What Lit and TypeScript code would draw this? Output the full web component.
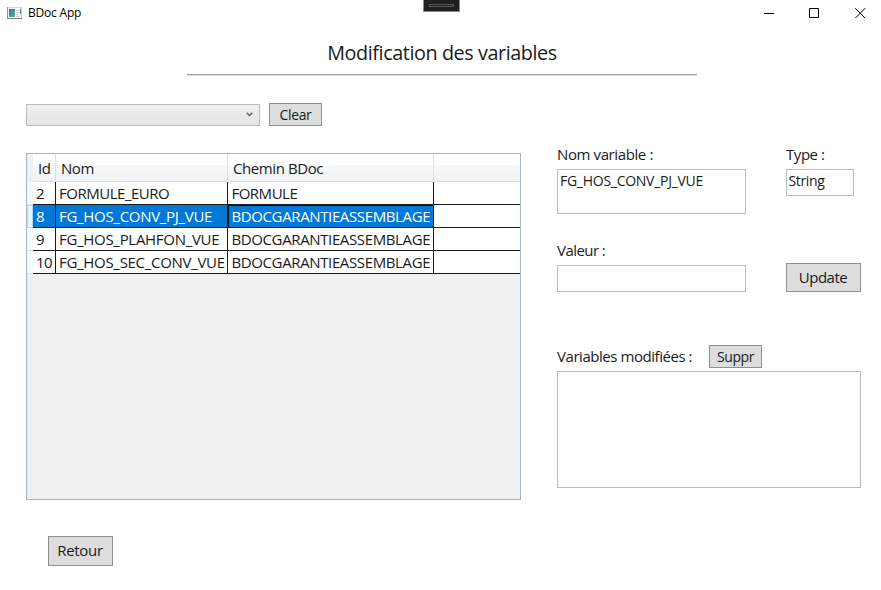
import { LitElement, html, css, svg } from "lit";
import { customElement, property, state } from "lit/decorators.js";
import { classMap } from "lit/directives/class-map.js";

interface Variable {
  id: number;
  nom: string;
  chemin: string;
}

@customElement("window-bar")
export class WindowBar extends LitElement {
  @property() caption = "";

  static styles = css`
    :host {
      display: flex;
      height: 26px;
      position: relative;
      color: #000;
    }
    .icon {
      margin: 7px 6px 0 7px;
      width: 15px;
      height: 12px;
    }
    .caption {
      flex: 1;
      font-size: 12px;
      line-height: 26px;
      letter-spacing: -0.2px;
    }
    .handle {
      position: absolute;
      left: 423px;
      top: 0;
      width: 37px;
      height: 12px;
    }
    svg {
      display: block;
    }
  `;

  render() {
    return html`
      <svg class="icon" viewBox="0 0 15 12">
        <defs>
          <linearGradient id="pane" x1="0" y1="0" x2="1" y2="1">
            <stop offset="0" stop-color="#3f6fa8" />
            <stop offset="1" stop-color="#5fb878" />
          </linearGradient>
        </defs>
        <rect width="15" height="12" fill="#f4f4f6" />
        <path d="M0 0h15v1H0z" fill="#d2d5dc" />
        <path d="M0 0h1v12H0z" fill="#8f9298" />
        <path d="M14 0h1v12h-1z" fill="#c3c6cb" />
        <path d="M0 11h15v1H0z" fill="#77797d" />
        <rect x="2" y="2" width="6" height="8" fill="url(#pane)" />
        <path d="M9 3.5h3M9 5.5h3M9 7.5h3M9 9.5h3" stroke="#d4d4d8" />
        <path d="M13 2h1v5h-1z" fill="#5a93a8" />
      </svg>
      <div class="caption">${this.caption}</div>
      <svg class="handle" viewBox="0 0 37 12">
        <rect width="37" height="12" fill="#8b8b8b" />
        <rect x="1" width="35" height="11" fill="#1f1f20" />
        <rect x="6.5" y="4.5" width="24" height="2" fill="none" stroke="#5a5a5c" />
      </svg>
    `;
  }
}

@customElement("window-controls")
export class WindowControls extends LitElement {
  static styles = css`
    :host {
      display: flex;
      gap: 34px;
      padding: 8px 15px 0 0;
    }
    svg {
      display: block;
      width: 11px;
      height: 11px;
    }
    svg:last-child {
      margin-left: 1px;
    }
  `;

  render() {
    const paths = ["M0 5.5h10", "M0.5 0.5h9v9h-9z", "M0.2 0.2l10 10M10.2 0.2l-10 10"];
    return paths.map(
      (d) => html`<svg viewBox="0 0 11 11">${svg`<path d=${d} fill="none" stroke="#000" />`}</svg>`
    );
  }
}

@customElement("variable-grid")
export class VariableGrid extends LitElement {
  @property({ attribute: false }) rows: Variable[] = [];
  @property({ type: Number }) selected = 0;

  static styles = css`
    :host {
      display: block;
      box-sizing: border-box;
      width: 495px;
      height: 347px;
      border: 1px solid #a0b7cf;
      background: #f0f0f0;
      font-size: 15px;
      color: #1a1a1a;
    }
    .row {
      display: grid;
      grid-template-columns: 6px 23px 172px 206px 1fr;
      height: 23px;
    }
    .head {
      height: 28px;
      background: linear-gradient(#fff 0 40%, #f7f8fa 41%, #f1f2f4);
      box-shadow: inset 0 -1px #dcdfe3;
    }
    .head > div {
      border-right: 1px solid #dfe1e5;
      line-height: 29px;
      padding-left: 5px;
      letter-spacing: -0.42px;
    }
    .head > .mark {
      background: #f1f1f1;
      border: 0;
      padding: 0;
    }
    .head > .rest {
      border: 0;
    }
    .mark {
      background: #f7f8f9;
      box-shadow: inset 0 -1px #e0e2e5;
    }
    .cell {
      box-sizing: border-box;
      border-right: 1px solid #1b1b1b;
      border-bottom: 1px solid #1b1b1b;
      background: #fff;
      padding-left: 3px;
      line-height: 23px;
      white-space: nowrap;
      overflow: hidden;
    }
    .rest {
      border-right: 0;
    }
    .on .mark {
      background: #e4f5fc;
      box-shadow: inset 0 0 0 1px #a5dcf3;
    }
    .on .cell:not(.rest) {
      background: #0078d7;
      color: #fff;
    }
    .on .path {
      box-shadow: inset 1px 1px #111;
    }
    .cell.id {
      letter-spacing: -0.5px;
    }
    .cell.nom {
      letter-spacing: -0.3px;
    }
    .cell.path {
      padding-left: 3.4px;
      letter-spacing: -0.37px;
    }
    .row:nth-child(2) .cell {
      letter-spacing: -0.48px;
    }
  `;

  render() {
    return html`
      <div class="row head">
        <div class="mark"></div>
        <div class="id">Id</div>
        <div class="nom">Nom</div>
        <div class="path">Chemin BDoc</div>
        <div class="rest"></div>
      </div>
      ${this.rows.map(
        (r) => html`
          <div class=${classMap({ row: true, on: r.id === this.selected })}>
            <div class="mark"></div>
            <div class="cell id">${r.id}</div>
            <div class="cell nom">${r.nom}</div>
            <div class="cell path">${r.chemin}</div>
            <div class="cell rest"></div>
          </div>
        `
      )}
    `;
  }
}

@customElement("app-root")
export class AppRoot extends LitElement {
  @state() private rows: Variable[] = [
    { id: 2, nom: "FORMULE_EURO", chemin: "FORMULE" },
    { id: 8, nom: "FG_HOS_CONV_PJ_VUE", chemin: "BDOCGARANTIEASSEMBLAGE" },
    { id: 9, nom: "FG_HOS_PLAHFON_VUE", chemin: "BDOCGARANTIEASSEMBLAGE" },
    { id: 10, nom: "FG_HOS_SEC_CONV_VUE", chemin: "BDOCGARANTIEASSEMBLAGE" },
  ];
  @state() private selected = 8;

  static styles = css`
    :host {
      display: flex;
      flex-direction: column;
      box-sizing: border-box;
      width: 881px;
      height: 590px;
      overflow: hidden;
      background: #fff;
      color: #1a1a1a;
      font-family: "Open Sans", "Noto Sans", sans-serif;
      font-size: 15px;
    }
    .top {
      display: flex;
    }
    window-bar {
      flex: 1;
    }
    h1 {
      box-sizing: border-box;
      margin: 9px 0 0 187px;
      width: 510px;
      height: 40px;
      padding-top: 1px;
      border-bottom: 1px solid #a0a0a0;
      box-shadow: 0 1px #dedede;
      font-size: 19.8px;
      font-weight: 400;
      line-height: 34px;
      letter-spacing: -0.42px;
      text-align: center;
    }
    .filter {
      display: flex;
      gap: 9px;
      margin: 28px 0 0 26px;
    }
    .combo {
      box-sizing: border-box;
      width: 234px;
      height: 22px;
      margin-top: 1px;
      border: 1px solid #bcbcbc;
      background: linear-gradient(#f0f0f0, #e5e5e5);
      display: flex;
      justify-content: flex-end;
      align-items: center;
      padding: 0 6px 2px 0;
    }
    .combo svg {
      width: 7px;
      height: 5px;
    }
    button {
      box-sizing: border-box;
      border: 1px solid #8f8f8f;
      border-radius: 0;
      background: #ddd;
      color: #1a1a1a;
      padding: 0;
      font: inherit;
      letter-spacing: -0.5px;
    }
    .small {
      width: 53px;
      height: 23px;
      line-height: 22px;
      font-size: 14px;
      letter-spacing: -0.38px;
    }
    .body {
      display: flex;
      gap: 36px;
      margin: 27px 0 0 26px;
    }
    .form {
      width: 304px;
      display: flex;
      flex-direction: column;
    }
    .pair {
      display: grid;
      grid-template-columns: 189px 75px;
      gap: 0 40px;
      align-items: start;
    }
    label {
      line-height: 18px;
      letter-spacing: -0.39px;
      white-space: nowrap;
    }
    .pair label {
      height: 24px;
      margin-top: -8px;
    }
    .type {
      letter-spacing: -0.45px;
    }
    .box {
      box-sizing: border-box;
      border: 1px solid #b9bbc0;
      height: 27px;
      padding: 0 2px;
      font-size: 14px;
      line-height: 21px;
      letter-spacing: -0.27px;
    }
    .name {
      height: 45px;
    }
    .kind {
      width: 68px;
      padding-left: 1.5px;
      letter-spacing: -0.35px;
    }
    .second {
      margin-top: 36px;
    }
    .second label {
      margin-top: -9px;
      height: 24px;
      letter-spacing: -0.55px;
      grid-column: 1 / 3;
    }
    .update {
      width: 75px;
      height: 29px;
      margin-top: -2px;
      padding: 0 1px 2px 0;
      line-height: 26px;
    }
    .changes {
      display: flex;
      align-items: center;
      gap: 17px;
      margin-top: 53px;
    }
    .changes label {
      letter-spacing: -0.45px;
      width: 135px;
      padding-bottom: 2px;
    }
    .list {
      box-sizing: border-box;
      height: 117px;
      margin-top: 3px;
      border: 1px solid #b9bbc0;
    }
    .back {
      width: 65px;
      height: 30px;
      margin: 36px 0 0 48px;
      padding: 0 1px 2px 0;
      line-height: 27px;
      letter-spacing: -0.3px;
    }
  `;

  render() {
    const current = this.rows.find((r) => r.id === this.selected);
    return html`
      <div class="top">
        <window-bar caption="BDoc App"></window-bar>
        <window-controls></window-controls>
      </div>
      <h1>Modification des variables</h1>
      <div class="filter">
        <div class="combo">
          <svg viewBox="0 0 7 5"><path d="M0.8 0.8L3.5 3.6L6.2 0.8" fill="none" stroke="#606060" stroke-width="1.4" /></svg>
        </div>
        <button class="small">Clear</button>
      </div>
      <div class="body">
        <variable-grid .rows=${this.rows} .selected=${this.selected}></variable-grid>
        <div class="form">
          <div class="pair">
            <label>Nom variable :</label>
            <label class="type">Type :</label>
            <div class="box name">${current?.nom}</div>
            <div class="box kind">String</div>
          </div>
          <div class="pair second">
            <label>Valeur :</label>
            <div class="box"></div>
            <button class="update">Update</button>
          </div>
          <div class="changes">
            <label>Variables modifiées :</label>
            <button class="small">Suppr</button>
          </div>
          <div class="list"></div>
        </div>
      </div>
      <div><button class="back">Retour</button></div>
    `;
  }
}
